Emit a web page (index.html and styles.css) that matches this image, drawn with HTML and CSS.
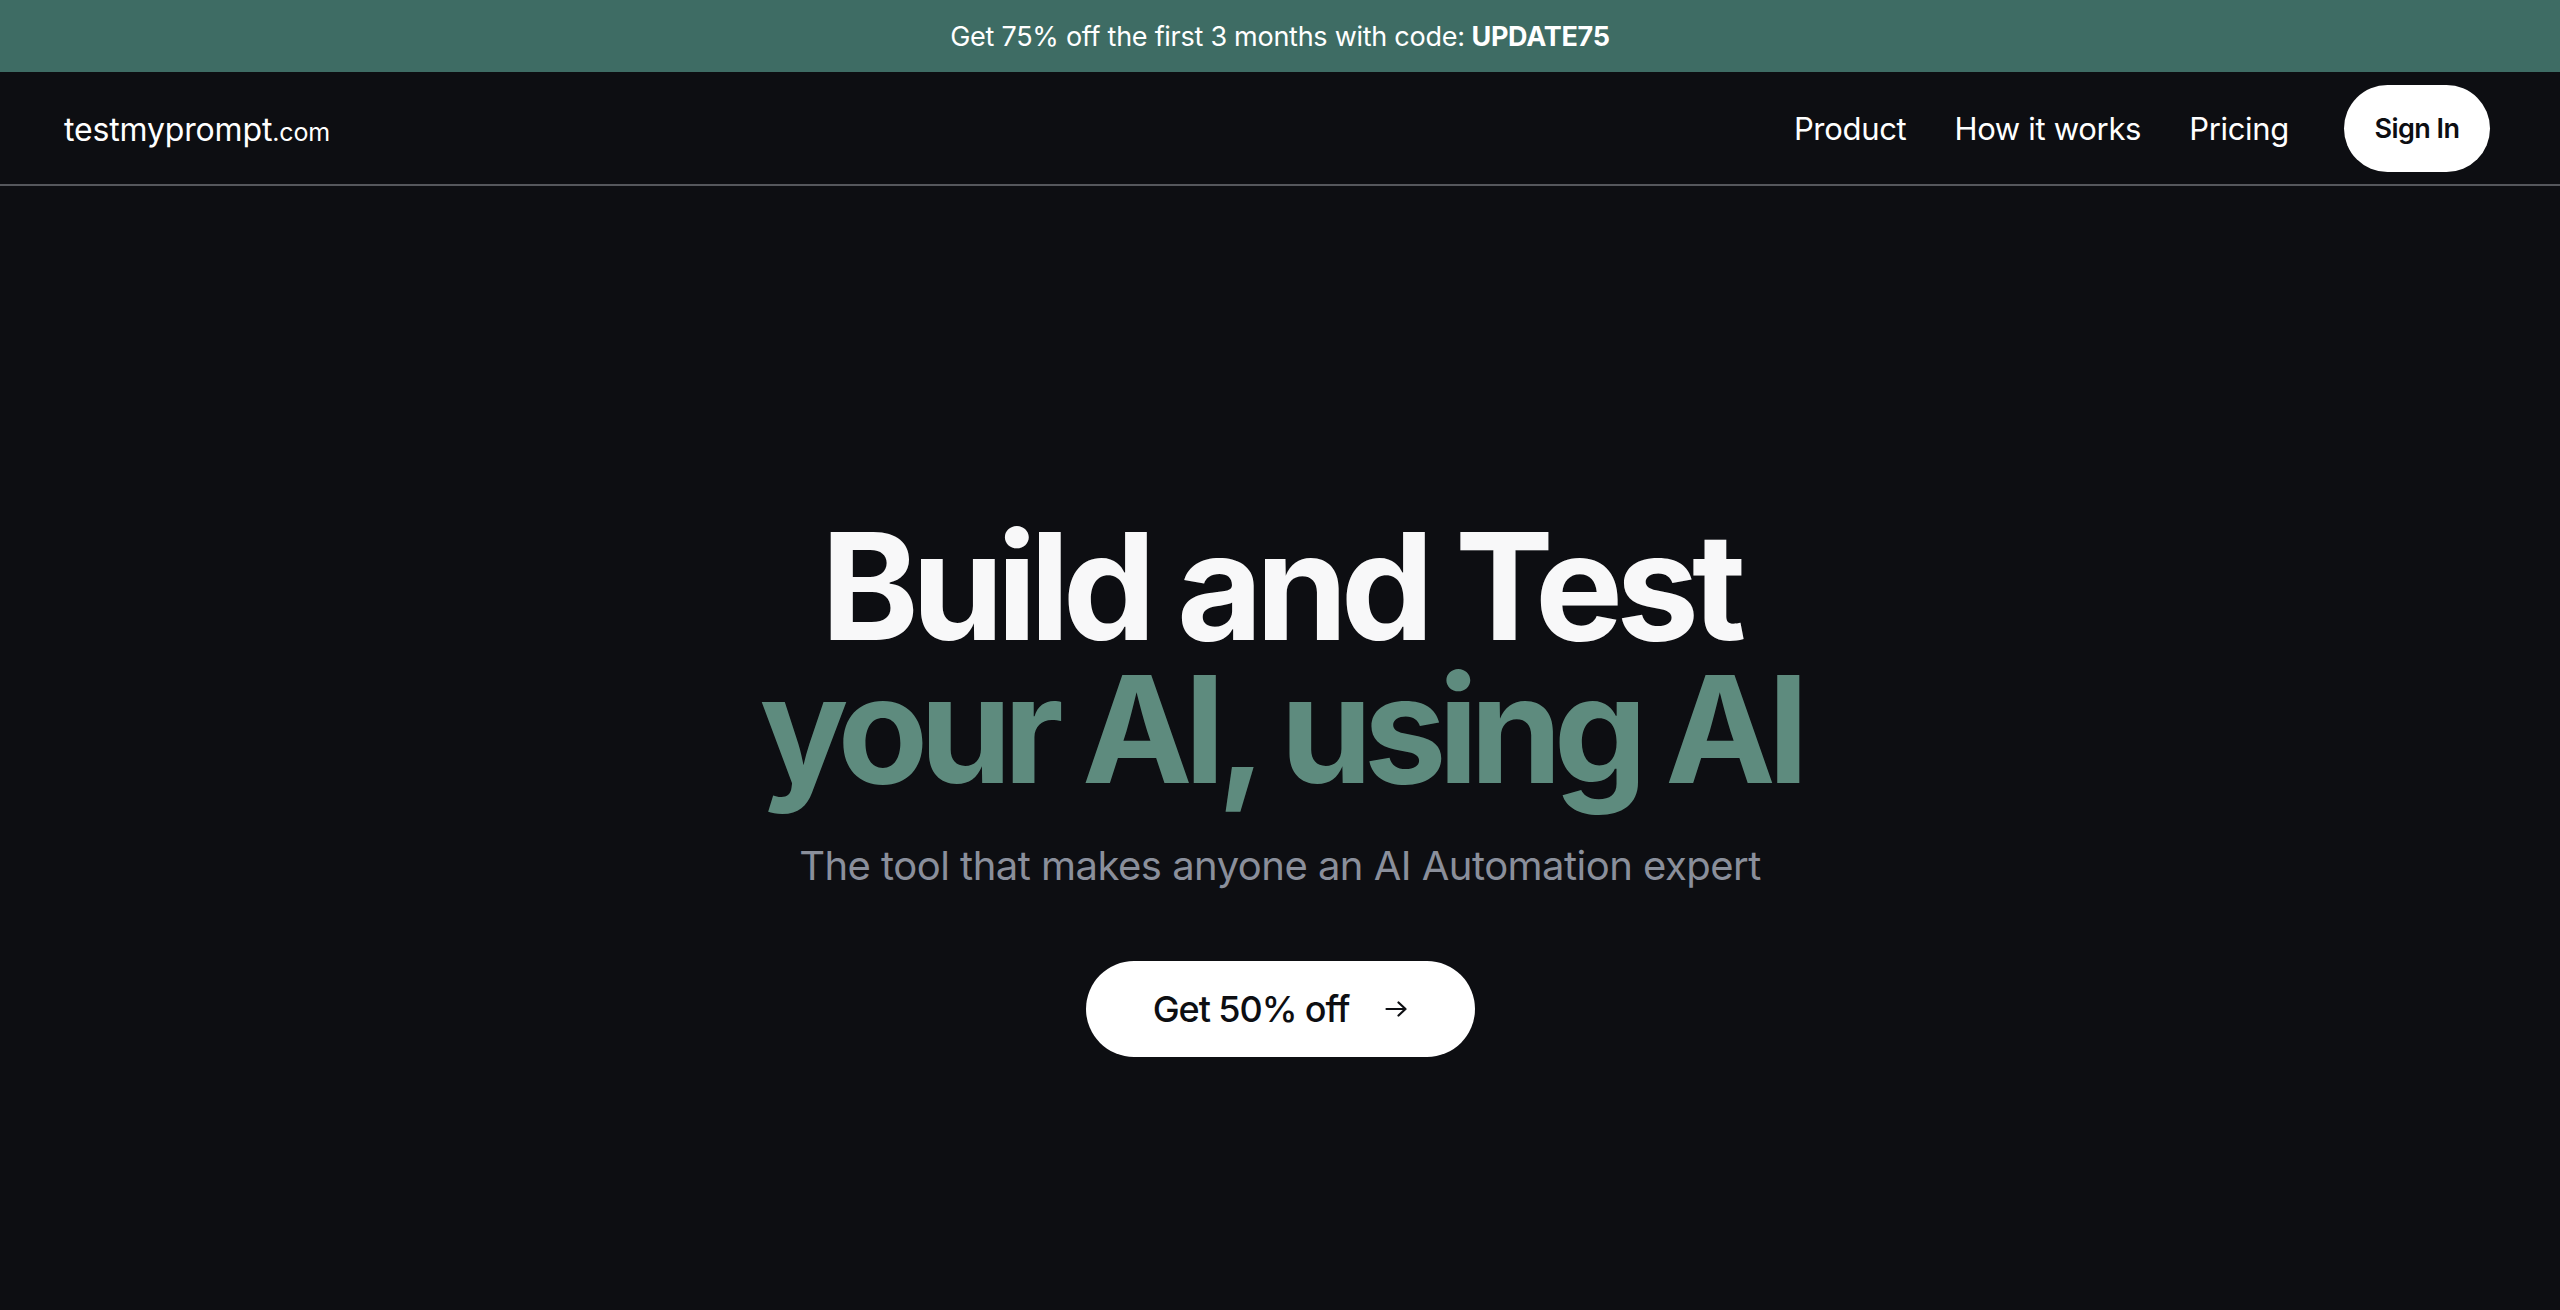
FILE: index.html
```html
<!DOCTYPE html>
<html lang="en">
<head>
<meta charset="utf-8">
<title>testmyprompt.com</title>
<link rel="stylesheet" href="styles.css">
</head>
<body>
<div class="promo">Get 75% off the first 3 months with code: <strong>UPDATE75</strong></div>
<header class="site-header">
  <a class="logo" href="#">testmyprompt<span class="logo-tld">.com</span></a>
  <nav class="nav">
    <a class="nav-link" href="#">Product</a>
    <a class="nav-link" href="#">How it works</a>
    <a class="nav-link" href="#">Pricing</a>
    <a class="btn-signin" href="#">Sign In</a>
  </nav>
</header>
<main class="hero">
  <h1 class="hero-title">
    <span class="line line-white">Build and Test</span>
    <span class="line line-green">your AI, using AI</span>
  </h1>
  <p class="hero-sub">The tool that makes anyone an AI Automation expert</p>
  <a class="btn-cta" href="#">Get 50% off
    <svg class="cta-arrow" width="22" height="16" viewBox="0 0 22 16" fill="none" stroke="#0d0e12" stroke-width="2.2" stroke-linecap="round" stroke-linejoin="round"><path d="M1.5 8h19M13.5 1.5 20.5 8l-7 6.5"/></svg>
  </a>
</main>
</body>
</html>
```

FILE: styles.css
```css
* { box-sizing: border-box; }
html, body { margin: 0; padding: 0; }
body {
  background: #0d0e12;
  color: #ffffff;
  font-family: Inter, "Noto Sans", "Liberation Sans", sans-serif;
  min-height: 1310px;
}
a { color: inherit; text-decoration: none; }

.promo {
  height: 72px;
  background: #3e6c64;
  display: flex;
  align-items: center;
  justify-content: center;
  font-size: 27px;
  letter-spacing: -0.01em;
  color: #ffffff;
}
.promo strong { font-weight: 700; margin-left: 0.25em; }

.site-header {
  height: 114px;
  border-bottom: 2px solid #55575c;
  display: flex;
  align-items: center;
  justify-content: space-between;
  padding: 0 70px 0 64px;
}
.logo {
  font-size: 32px;
  font-weight: 400;
  letter-spacing: -0.005em;
  padding-top: 2px;
}
.logo-tld { font-size: 25px; font-weight: 400; letter-spacing: -0.005em; }

.nav {
  display: flex;
  align-items: center;
  gap: 48px;
}
.nav-link {
  font-size: 31px;
  letter-spacing: -0.01em;
}
.btn-signin {
  margin-left: 7px;
  width: 146px;
  height: 87px;
  border-radius: 44px;
  background: #ffffff;
  color: #0d0e12;
  font-size: 27px;
  font-weight: 600;
  letter-spacing: -0.02em;
  display: flex;
  align-items: center;
  justify-content: center;
}

.hero {
  display: flex;
  flex-direction: column;
  align-items: center;
  padding-top: 329px;
}
.hero-title {
  margin: 0;
  font-size: 148px;
  line-height: 143px;
  font-weight: 700;
  text-align: center;
}
.line { display: block; }
.line-white { color: #f8f8f9; letter-spacing: -0.048em; }
.line-green { color: #5e8b7e; letter-spacing: -0.057em; }

.hero-sub {
  margin: 41px 0 0;
  font-size: 40px;
  line-height: 48px;
  color: #8a8f9b;
  letter-spacing: -0.013em;
}

.btn-cta {
  margin-top: 71px;
  height: 96px;
  width: 389px;
  border-radius: 48px;
  background: #ffffff;
  color: #0d0e12;
  font-size: 36px;
  font-weight: 500;
  letter-spacing: -0.03em;
  display: flex;
  align-items: center;
  justify-content: center;
  gap: 36px;
}
.cta-arrow { display: block; }
```
